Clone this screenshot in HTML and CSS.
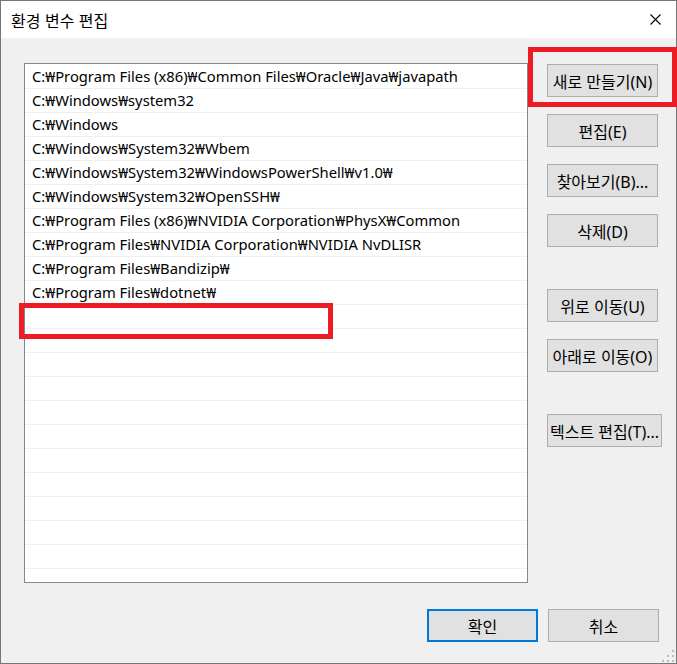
FILE: index.html
```html
<!DOCTYPE html>
<html lang="ko">
<head>
<meta charset="utf-8">
<title>환경 변수 편집</title>
<link rel="stylesheet" href="styles.css">
</head>
<body>
<div class="window">
  <div class="titlebar">
    <span class="title">환경 변수 편집</span>
    <span class="close">
      <svg width="11" height="11" viewBox="0 0 11 11"><path d="M0.5 0.5 L10.5 10.5 M10.5 0.5 L0.5 10.5" stroke="#000" stroke-width="1.1" fill="none"/></svg>
    </span>
  </div>
  <div class="content">
    <div class="list">
      <div class="row">C:₩Program Files (x86)₩Common Files₩Oracle₩Java₩javapath</div>
      <div class="row">C:₩Windows₩system32</div>
      <div class="row">C:₩Windows</div>
      <div class="row">C:₩Windows₩System32₩Wbem</div>
      <div class="row">C:₩Windows₩System32₩WindowsPowerShell₩v1.0₩</div>
      <div class="row">C:₩Windows₩System32₩OpenSSH₩</div>
      <div class="row">C:₩Program Files (x86)₩NVIDIA Corporation₩PhysX₩Common</div>
      <div class="row">C:₩Program Files₩NVIDIA Corporation₩NVIDIA NvDLISR</div>
      <div class="row">C:₩Program Files₩Bandizip₩</div>
      <div class="row">C:₩Program Files₩dotnet₩</div>
      <div class="row"></div>
      <div class="row"></div>
      <div class="row"></div>
      <div class="row"></div>
      <div class="row"></div>
      <div class="row"></div>
      <div class="row"></div>
      <div class="row"></div>
      <div class="row"></div>
      <div class="row"></div>
      <div class="row"></div>
    </div>
    <div class="side">
      <button class="btn">새로 만들기(N)</button>
      <button class="btn">편집(E)</button>
      <button class="btn">찾아보기(B)...</button>
      <button class="btn">삭제(D)</button>
      <button class="btn spaced">위로 이동(U)</button>
      <button class="btn">아래로 이동(O)</button>
      <button class="btn spaced wide">텍스트 편집(T)...</button>
    </div>
  </div>
  <div class="footer">
    <button class="btn primary">확인</button>
    <button class="btn">취소</button>
  </div>
  <div class="mark mark-new"></div>
  <div class="mark mark-row"></div>
  <svg class="grip" width="12" height="12" viewBox="0 0 12 12">
    <rect x="10" y="0" width="2" height="2" fill="#bdbdbd"/>
    <rect x="5" y="5" width="2" height="2" fill="#bdbdbd"/>
    <rect x="10" y="5" width="2" height="2" fill="#bdbdbd"/>
    <rect x="0" y="10" width="2" height="2" fill="#bdbdbd"/>
    <rect x="5" y="10" width="2" height="2" fill="#bdbdbd"/>
    <rect x="10" y="10" width="2" height="2" fill="#bdbdbd"/>
  </svg>
</div>
</body>
</html>
```

FILE: styles.css
```css
* { box-sizing: border-box; }
html, body { margin: 0; padding: 0; background: #f0f0f0; }
body {
  font-family: "Noto Sans", "Noto Sans CJK KR", sans-serif;
  font-size: 15px;
  color: #000;
}
.window {
  position: relative;
  width: 677px;
  height: 664px;
  border: 1px solid #767676;
  background: #f0f0f0;
  display: flex;
  flex-direction: column;
}
.titlebar {
  height: 37px;
  flex: none;
  background: #fff;
  display: flex;
  align-items: center;
  justify-content: space-between;
  padding: 0 15px 0 10px;
}
.title {
  font-family: "Noto Sans CJK KR", sans-serif;
  font-size: 16px;
  line-height: 1;
}
.close { display: flex; width: 11px; height: 11px; }
.content {
  display: flex;
  gap: 19px;
  padding: 25px 0 0 23px;
}
.list {
  width: 504px;
  height: 520px;
  border: 1px solid #828790;
  background: #fff;
  padding-top: 1px;
  overflow: hidden;
}
.row {
  height: 24px;
  border-bottom: 1px solid #efefef;
  padding-left: 7px;
  line-height: 23px;
  white-space: nowrap;
  font-size: 14.75px;
}
.side {
  display: flex;
  flex-direction: column;
  align-items: flex-start;
  gap: 17px;
  padding-top: 1px;
}
.btn {
  width: 111px;
  height: 33px;
  border: 1px solid #adadad;
  background: #e1e1e1;
  font-family: "Noto Sans", "Noto Sans CJK KR", sans-serif;
  font-size: 16px;
  color: #000;
  padding: 0;
  margin: 0;
  white-space: nowrap;
}
.btn.spaced { margin-top: 25px; }
.btn.wide { width: 115px; }
.btn.primary { border: 2px solid #0078d7; }
.footer {
  display: flex;
  justify-content: flex-end;
  gap: 10px;
  padding: 26px 17px 0 0;
}
.mark {
  position: absolute;
  border: 5px solid #ed1c24;
}
.mark-new { left: 527px; top: 46px; width: 149px; height: 60px; }
.mark-row { left: 18px; top: 302px; width: 314px; height: 36px; }
.grip { position: absolute; right: 2px; bottom: 1px; }
```
